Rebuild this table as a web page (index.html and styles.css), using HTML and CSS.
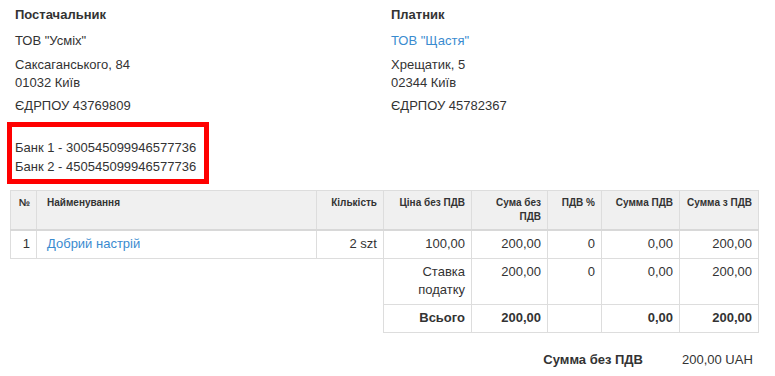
FILE: index.html
```html
<!DOCTYPE html>
<html lang="uk">
<head>
<meta charset="utf-8">
<title>Рахунок</title>
<link rel="stylesheet" href="styles.css">
</head>
<body>
<div class="parties">
  <div class="party">
    <h3 class="party-title">Постачальник</h3>
    <p>ТОВ "Усміх"</p>
    <p>Саксаганського, 84<br>01032 Київ</p>
    <p class="last">ЄДРПОУ 43769809</p>
  </div>
  <div class="party">
    <h3 class="party-title">Платник</h3>
    <p><a class="link" href="#">ТОВ "Щастя"</a></p>
    <p>Хрещатик, 5<br>02344 Київ</p>
    <p class="last">ЄДРПОУ 45782367</p>
  </div>
</div>
<div class="banks">
  <div>Банк 1 - 300545099946577736</div>
  <div>Банк 2 - 450545099946577736</div>
</div>
<table class="items">
  <colgroup>
    <col class="c-no"><col class="c-name"><col class="c-qty"><col class="c-price"><col class="c-sum"><col class="c-vat"><col class="c-vatsum"><col class="c-total">
  </colgroup>
  <thead>
    <tr>
      <th>№</th>
      <th class="left">Найменування</th>
      <th>Кількість</th>
      <th>Ціна без ПДВ</th>
      <th>Сума без<br>ПДВ</th>
      <th>ПДВ %</th>
      <th>Сумма ПДВ</th>
      <th>Сумма з ПДВ</th>
    </tr>
  </thead>
  <tbody>
    <tr>
      <td>1</td>
      <td class="left"><a class="link" href="#">Добрий настрій</a></td>
      <td>2 szt</td>
      <td>100,00</td>
      <td>200,00</td>
      <td>0</td>
      <td>0,00</td>
      <td>200,00</td>
    </tr>
    <tr class="summary">
      <td class="blank" colspan="3"></td>
      <td>Ставка податку</td>
      <td>200,00</td>
      <td>0</td>
      <td>0,00</td>
      <td>200,00</td>
    </tr>
    <tr class="summary total">
      <td class="blank" colspan="3"></td>
      <td>Всього</td>
      <td>200,00</td>
      <td></td>
      <td>0,00</td>
      <td>200,00</td>
    </tr>
  </tbody>
</table>
<div class="grand">
  <span class="grand-label">Сумма без ПДВ</span>
  <span class="grand-value">200,00 UAH</span>
</div>
</body>
</html>
```

FILE: styles.css
```css
html, body {
  margin: 0;
  padding: 0;
  background: #ffffff;
}
body {
  font-family: "Liberation Sans", Arial, Helvetica, sans-serif;
  font-size: 13px;
  line-height: 18px;
  color: #333333;
}
.parties {
  display: grid;
  grid-template-columns: 376px 1fr;
  padding: 6px 0 0 15px;
}
.party-title {
  margin: 0 0 8px;
  font-size: 13px;
  line-height: 18px;
  font-weight: bold;
}
.party p {
  margin: 0 0 5.5px;
}
.party p.last {
  margin-bottom: 0;
}
.link {
  color: #3a8bcf;
  text-decoration: none;
}
.banks {
  box-sizing: border-box;
  width: 202px;
  margin: 7px 0 0 7px;
  padding: 12px 3px 3px;
  border: 5px solid #ff0000;
  line-height: 18.5px;
}
.items {
  margin: 6px 0 0 10px;
  width: 748px;
  table-layout: fixed;
  border-collapse: collapse;
}
.c-no { width: 26px; }
.c-name { width: 280px; }
.c-qty { width: 67px; }
.c-price { width: 88px; }
.c-sum { width: 76px; }
.c-vat { width: 54px; }
.c-vatsum { width: 78px; }
.c-total { width: 79px; }
.items th,
.items td {
  border: 1px solid #dddddd;
  text-align: right;
  vertical-align: top;
}
.items th {
  padding: 5px 6px 4px;
  background: #f0f0f0;
  font-size: 10px;
  line-height: 14.3px;
  font-weight: bold;
  border-bottom: 2px solid #d8d8d8;
  white-space: nowrap;
}
.items td {
  padding: 4.5px 6px;
  line-height: 18px;
}
.items .left {
  text-align: left;
  padding-left: 10px;
}
.items td.blank {
  border: none;
  background: transparent;
}
.items tr.total td {
  font-weight: bold;
}
.grand {
  display: flex;
  justify-content: flex-end;
  gap: 39px;
  margin-top: 18px;
  padding-right: 15px;
}
.grand-label {
  font-weight: bold;
}
.grand-value {
  min-width: 78px;
}
```
